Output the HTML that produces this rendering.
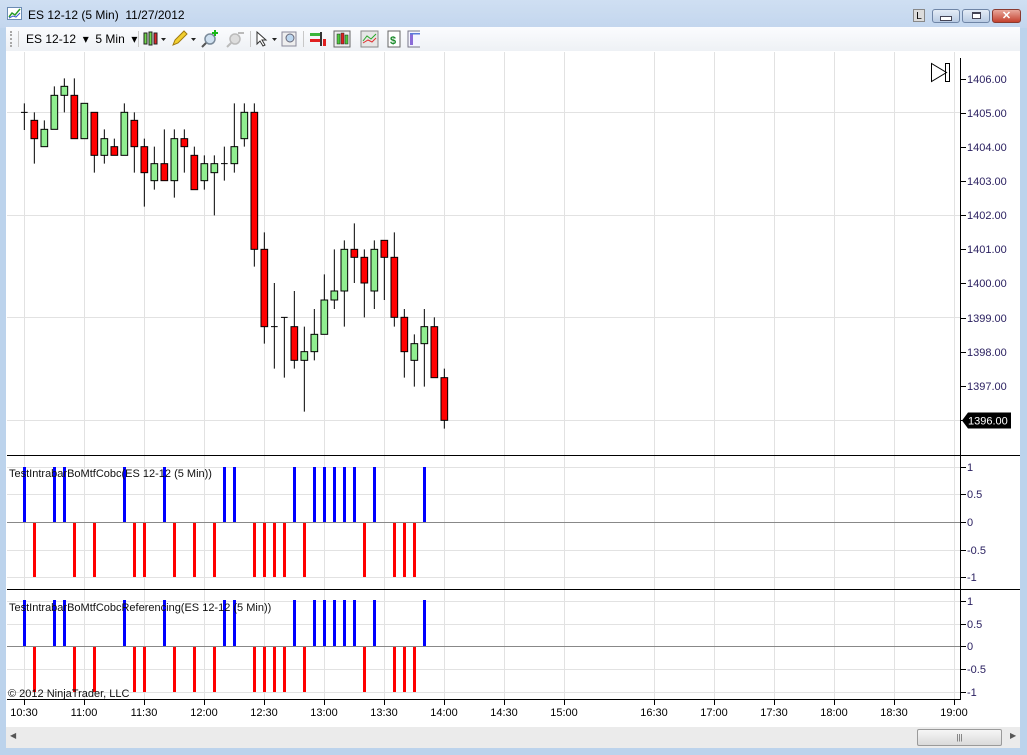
<!DOCTYPE html>
<html><head><meta charset="utf-8"><style>
html,body{margin:0;padding:0;}
body{width:1027px;height:755px;position:relative;overflow:hidden;background:#bcd3ec;font-family:"Liberation Sans",sans-serif;}
.abs{position:absolute;}
</style></head><body>
<!-- title bar -->
<div class="abs" style="left:0;top:0;width:1027px;height:28px;background:linear-gradient(#cfdff2,#c3d6ee);"></div>
<svg class="abs" style="left:7px;top:7px" width="16" height="14"><rect x="0.5" y="0.5" width="14" height="12" fill="#fff" stroke="#6b8bb3"/><polyline points="2,10 5,6 8,8 13,2" fill="none" stroke="#2a9a2a" stroke-width="1.5"/><polyline points="2,11 6,9 9,10 13,6" fill="none" stroke="#3a5ad0" stroke-width="1"/></svg>
<div class="abs" style="left:28px;top:8px;font-size:12px;color:#000;">ES 12-12 (5 Min)&nbsp; 11/27/2012</div>
<div class="abs" style="left:913px;top:9px;width:12px;height:13px;background:#dcdcdc;border:1px solid #888;font-size:10px;line-height:13px;text-align:center;color:#000;box-sizing:border-box;">L</div>
<div class="abs" style="left:932px;top:9px;width:28px;height:14px;border:1px solid #6f85a6;border-radius:3px;background:linear-gradient(#e4ecf6,#b9cbe3);box-sizing:border-box;"><div style="margin:6px auto 0;width:10px;height:3px;background:#fff;border:1px solid #445"></div></div>
<div class="abs" style="left:962px;top:9px;width:28px;height:14px;border:1px solid #6f85a6;border-radius:3px;background:linear-gradient(#e4ecf6,#b9cbe3);box-sizing:border-box;"><div style="margin:2px auto 0;width:9px;height:7px;background:#fff;border:1px solid #445;box-sizing:border-box;border-top-width:2px"></div></div>
<div class="abs" style="left:992px;top:9px;width:29px;height:14px;border:1px solid #8a3a30;border-radius:3px;background:linear-gradient(#e8a89c,#c4422f);box-sizing:border-box;color:#fff;font-size:11px;font-weight:bold;text-align:center;line-height:12px;">✕</div>
<!-- toolbar -->
<div class="abs" style="left:6px;top:27px;width:1014px;height:24px;background:linear-gradient(#fbfcfe,#eef1f5);"></div>
<div class="abs" style="left:10px;top:31px;width:2px;height:16px;border-left:2px dotted #a8a8a8;"></div>
<div class="abs" style="left:18px;top:31px;width:1px;height:16px;background:#c8c8c8;"></div>
<div class="abs" style="left:26px;top:32px;font-size:12px;color:#000;">ES 12-12 &nbsp;▾ &nbsp;5 Min &nbsp;▾</div>
<div class="abs" style="left:138px;top:31px;width:1px;height:16px;background:#c8c8c8;"></div>
<svg class="abs" style="left:140px;top:29px" width="280" height="20">
<g stroke="#222" stroke-width="1"><rect x="4" y="4" width="3" height="11" fill="#6fd84a"/><rect x="9" y="3" width="3" height="13" fill="#6fd84a"/><rect x="14" y="4" width="3" height="11" fill="#e0252a"/></g>
<path d="M21 9h5l-2.5 3z" fill="#222"/>
<path d="M33 16l2-5 9-9 3 3-9 9z" fill="#f2cf2f" stroke="#a07a10"/>
<path d="M51 9h5l-2.5 3z" fill="#222"/>
<circle cx="70" cy="10" r="5" fill="#cfe0f0" stroke="#7a8a9a" stroke-width="1.5"/><path d="M66 14l-4 4" stroke="#555" stroke-width="2"/><path d="M75 1v6M72 4h6" stroke="#18b818" stroke-width="2"/>
<circle cx="95" cy="10" r="5" fill="#ddd" stroke="#bbb" stroke-width="1.5"/><path d="M91 14l-4 4" stroke="#bbb" stroke-width="2"/><path d="M98 4h6" stroke="#bbb" stroke-width="2"/>
<rect x="110" y="2" width="1" height="16" fill="#c8c8c8"/>
<path d="M117 3v12l3-3 3 5 2-1-3-5h4z" fill="#fff" stroke="#333"/>
<path d="M132 9h5l-2.5 3z" fill="#222"/>
<rect x="142" y="3" width="14" height="14" fill="#eee" stroke="#889"/><circle cx="150" cy="9" r="4" fill="#bcd6ee" stroke="#667"/>
<rect x="163" y="2" width="1" height="16" fill="#c8c8c8"/>
<rect x="170" y="4" width="10" height="3" fill="#3bb53b"/><rect x="170" y="10" width="10" height="3" fill="#e02020"/><rect x="180" y="3" width="2" height="14" fill="#333"/><rect x="183" y="10" width="3" height="7" fill="#e02020"/>
<rect x="194" y="2" width="16" height="16" fill="#eee" stroke="#666"/><rect x="197" y="5" width="3" height="10" fill="#4cc83c" stroke="#222" stroke-width=".5"/><rect x="201" y="4" width="3" height="11" fill="#e02020" stroke="#222" stroke-width=".5"/><rect x="205" y="6" width="3" height="9" fill="#4cc83c" stroke="#222" stroke-width=".5"/>
<rect x="221" y="2" width="17" height="16" fill="#e6e6e6" stroke="#888"/><polyline points="223,12 227,7 231,10 236,5" fill="none" stroke="#2aa82a"/><polyline points="223,14 228,11 232,13 236,9" fill="none" stroke="#e03030"/>
<rect x="248" y="2" width="12" height="16" fill="#fff" stroke="#666"/><text x="250" y="15" font-size="11" font-weight="bold" fill="#1a8a2a" font-family="Liberation Sans">$</text>
<rect x="268" y="2" width="13" height="16" fill="#f4f4ff" stroke="#778"/><rect x="270" y="5" width="3" height="11" fill="#8a6ad8"/><rect x="270" y="4" width="10" height="1.5" fill="#5a7ad8"/>
</svg>
<!-- chart area -->
<div class="abs" style="left:6px;top:51px;width:1014px;height:676px;background:#fff;"></div>
<div class="abs" style="left:6px;top:727px;width:1014px;height:21px;background:#ebebeb;"></div>
<div class="abs" style="left:10px;top:731px;font-size:8px;color:#555;">◀</div>
<div class="abs" style="left:917px;top:729px;width:85px;height:17px;border:1px solid #9a9a9a;border-radius:2px;background:linear-gradient(#f6f6f6,#dadada);box-sizing:border-box;font-size:8px;text-align:center;line-height:15px;color:#555;">|||</div>
<div class="abs" style="left:1010px;top:731px;font-size:8px;color:#555;">▶</div>

<svg class="abs" style="left:0;top:0" width="1027" height="755" font-family="Liberation Sans">
<!-- vertical grid -->
<g stroke="#e2e2e2" stroke-width="1">
<path d="M24.5 52V700M84.5 52V700M144.5 52V700M204.5 52V700M264.5 52V700M324.5 52V700M384.5 52V700M444.5 52V700M504.5 52V700M564.5 52V700M654.5 52V700M714.5 52V700M774.5 52V700M834.5 52V700M894.5 52V700M954.5 52V700"/>
<path d="M7 112.5H960M7 215.5H960M7 317.5H960M7 420.5H960"/>
<path d="M7 467.5H960M7 494.5H960M7 550.5H960M7 577.5H960"/>
<path d="M7 601.5H960M7 624.5H960M7 669.5H960M7 692.5H960"/>
</g>
<path d="M7 522.5H960M7 646.5H960" stroke="#888"/>
<path d="M7 455.5H1020M7 589.5H1020M7 699.5H961M960.5 58V700" stroke="#000"/>
<!-- price axis -->
<g stroke="#000"><path d="M961 79.5h5M961 113.5h5M961 147.5h5M961 181.5h5M961 215.5h5M961 249.5h5M961 283.5h5M961 318.5h5M961 352.5h5M961 386.5h5M961 420.5h5M961 467.5h5M961 494.5h5M961 522.5h5M961 550.5h5M961 577.5h5M961 601.5h5M961 624.5h5M961 646.5h5M961 669.5h5M961 692.5h5"/>
<path d="M24.5 700v5M84.5 700v5M144.5 700v5M204.5 700v5M264.5 700v5M324.5 700v5M384.5 700v5M444.5 700v5M504.5 700v5M564.5 700v5M654.5 700v5M714.5 700v5M774.5 700v5M834.5 700v5M894.5 700v5M954.5 700v5"/></g>
<g font-size="11" fill="#2a2060">
<text x="967" y="83">1406.00</text><text x="967" y="117">1405.00</text><text x="967" y="151">1404.00</text><text x="967" y="185">1403.00</text><text x="967" y="219">1402.00</text><text x="967" y="253">1401.00</text><text x="967" y="287">1400.00</text><text x="967" y="322">1399.00</text><text x="967" y="356">1398.00</text><text x="967" y="390">1397.00</text>
<text x="967" y="471">1</text><text x="967" y="498">0.5</text><text x="967" y="526">0</text><text x="967" y="554">-0.5</text><text x="967" y="581">-1</text>
<text x="967" y="605">1</text><text x="967" y="628">0.5</text><text x="967" y="650">0</text><text x="967" y="673">-0.5</text><text x="967" y="696">-1</text>
</g>
<path d="M962 420.5l6-8h43v16h-43z" fill="#000"/>
<text x="968" y="424.5" font-size="11" fill="#fff">1396.00</text>
<g font-size="11" fill="#000" text-anchor="middle">
<text x="24" y="716">10:30</text><text x="84" y="716">11:00</text><text x="144" y="716">11:30</text><text x="204" y="716">12:00</text><text x="264" y="716">12:30</text><text x="324" y="716">13:00</text><text x="384" y="716">13:30</text><text x="444" y="716">14:00</text><text x="504" y="716">14:30</text><text x="564" y="716">15:00</text><text x="654" y="716">16:30</text><text x="714" y="716">17:00</text><text x="774" y="716">17:30</text><text x="834" y="716">18:00</text><text x="894" y="716">18:30</text><text x="954" y="716">19:00</text>
</g>
<!-- play icon -->
<path d="M931.5 63.5v18l15-9z" fill="none" stroke="#000"/><rect x="945.5" y="63.5" width="4" height="18" fill="none" stroke="#000"/>
<!-- candles -->
<g transform="translate(0,60) scale(0.33333)" stroke="#000" stroke-width="3">
<path d="M73 130V210M63 157H83M103 157V311M133 181V260M163 79V208M193 55V157M223 55V236M253 130V236M283 157V338M313 208V311M343 236V286M373 130V286M403 157V338M433 236V440M463 260V389M493 208V362M523 208V413M553 208V338M583 260V389M613 286V389M643 286V466M673 260V362M663 311H683M703 130V338M733 130V260M763 130V620M793 517V851M823 669V926M813 800H833M853 772V953M843 772H863M883 693V926M913 800V1055M943 747V901M973 643V823M1003 568V747M1033 541V800M1063 490V669M1093 568V772M1123 541V747M1153 541V720M1183 517V800M1213 747V953M1243 823V980M1273 747V980M1303 772V953M1333 926V1106"/>
<g fill="#ff0000">
<rect x="93" y="181" width="20" height="55"/><rect x="213" y="106" width="20" height="130"/><rect x="273" y="157" width="20" height="129"/><rect x="333" y="260" width="20" height="26"/><rect x="393" y="181" width="20" height="79"/><rect x="423" y="260" width="20" height="78"/><rect x="483" y="311" width="20" height="51"/><rect x="543" y="236" width="20" height="24"/><rect x="573" y="286" width="20" height="103"/><rect x="753" y="157" width="20" height="411"/><rect x="783" y="568" width="20" height="232"/><rect x="873" y="800" width="20" height="101"/><rect x="1053" y="568" width="20" height="24"/><rect x="1083" y="592" width="20" height="77"/><rect x="1143" y="541" width="20" height="51"/><rect x="1173" y="592" width="20" height="180"/><rect x="1203" y="772" width="20" height="103"/><rect x="1293" y="800" width="20" height="153"/><rect x="1323" y="953" width="20" height="128"/>
</g>
<g fill="#90ee90">
<rect x="123" y="208" width="20" height="52"/><rect x="153" y="106" width="20" height="102"/><rect x="183" y="79" width="20" height="27"/><rect x="243" y="130" width="20" height="106"/><rect x="303" y="236" width="20" height="50"/><rect x="363" y="157" width="20" height="129"/><rect x="453" y="311" width="20" height="51"/><rect x="513" y="236" width="20" height="126"/><rect x="603" y="311" width="20" height="51"/><rect x="633" y="311" width="20" height="27"/><rect x="693" y="260" width="20" height="51"/><rect x="723" y="157" width="20" height="79"/><rect x="903" y="875" width="20" height="26"/><rect x="933" y="823" width="20" height="52"/><rect x="963" y="720" width="20" height="103"/><rect x="993" y="693" width="20" height="27"/><rect x="1023" y="568" width="20" height="125"/><rect x="1113" y="568" width="20" height="125"/><rect x="1233" y="851" width="20" height="50"/><rect x="1263" y="800" width="20" height="51"/>
</g>
</g>
<!-- indicator bars panel 1 -->
<g stroke-width="3">
<path stroke="#0000ff" d="M24.5 467V522M54.5 467V522M64.5 467V522M124.5 467V522M164.5 467V522M224.5 467V522M234.5 467V522M294.5 467V522M314.5 467V522M324.5 467V522M334.5 467V522M344.5 467V522M354.5 467V522M374.5 467V522M424.5 467V522"/>
<path stroke="#ff0000" d="M34.5 523V577M74.5 523V577M94.5 523V577M134.5 523V577M144.5 523V577M174.5 523V577M194.5 523V577M214.5 523V577M254.5 523V577M264.5 523V577M274.5 523V577M284.5 523V577M304.5 523V577M364.5 523V577M394.5 523V577M404.5 523V577M414.5 523V577"/>
<path stroke="#0000ff" d="M24.5 600V646M54.5 600V646M64.5 600V646M124.5 600V646M164.5 600V646M224.5 600V646M234.5 600V646M294.5 600V646M314.5 600V646M324.5 600V646M334.5 600V646M344.5 600V646M354.5 600V646M374.5 600V646M424.5 600V646"/>
<path stroke="#ff0000" d="M34.5 647V692M74.5 647V692M94.5 647V692M134.5 647V692M144.5 647V692M174.5 647V692M194.5 647V692M214.5 647V692M254.5 647V692M264.5 647V692M274.5 647V692M284.5 647V692M304.5 647V692M364.5 647V692M394.5 647V692M404.5 647V692M414.5 647V692"/>
</g>
<g font-size="11" fill="#111">
<text x="9" y="477">TestIntrabarBoMtfCobc(ES 12-12 (5 Min))</text>
<text x="9" y="611">TestIntrabarBoMtfCobcReferencing(ES 12-12 (5 Min))</text>
<text x="8" y="697">© 2012 NinjaTrader, LLC</text>
</g>
</svg>
</body></html>
